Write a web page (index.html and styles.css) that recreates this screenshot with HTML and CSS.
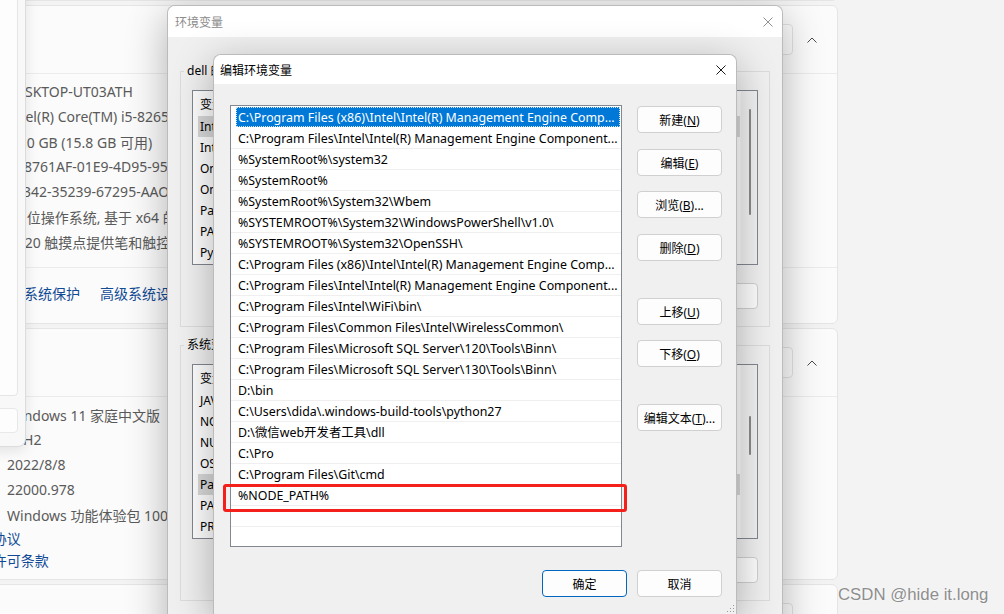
FILE: index.html
```html
<!DOCTYPE html>
<html lang="zh-CN">
  <head>
    <meta charset="UTF-8" />
    <title>编辑环境变量</title>
    <link rel="stylesheet" href="styles.css">
  </head>
  <body>
    <!-- settings page behind the dialogs -->
    <div class="settings">
      <section class="card card-top"></section>
      <section class="card">
        <div class="card-head">
          <span class="card-title">设备规格</span>
          <button class="copy-btn">复制</button>
          <svg class="chevron" viewBox="0 0 16 16"><path d="M3.5 10.5 L8 6 L12.5 10.5" /></svg>
        </div>
        <dl class="spec spec-first">
          <dt>设备名称</dt><dd>DESKTOP-UT03ATH</dd>
          <dt>处理器</dt><dd>Intel(R) Core(TM) i5-8265U CPU @ 1.60GHz</dd>
          <dt>机带 RAM</dt><dd>16.0 GB (15.8 GB 可用)</dd>
          <dt>设备 ID</dt><dd>A18761AF-01E9-4D95-9563-1C2B9A5E3F10</dd>
          <dt>产品 ID</dt><dd>00342-35239-67295-AAOEM</dd>
          <dt>系统类型</dt><dd>64 位操作系统, 基于 x64 的处理器</dd>
          <dt>笔和触控</dt><dd>为 20 触摸点提供笔和触控支持</dd>
        </dl>
        <div class="card-foot">
          <span>相关链接</span>
          <a>域或工作组</a>
          <a>系统保护</a>
          <a>高级系统设置</a>
        </div>
      </section>
      <section class="card">
        <div class="card-head">
          <span class="card-title">Windows 规格</span>
          <button class="copy-btn">复制</button>
          <svg class="chevron" viewBox="0 0 16 16"><path d="M3.5 10.5 L8 6 L12.5 10.5" /></svg>
        </div>
        <dl class="spec">
          <dt>版本</dt><dd>Windows 11 家庭中文版</dd>
          <dt>版本号</dt><dd>21H2</dd>
          <dt>安装日期</dt><dd>2022/8/8</dd>
          <dt>操作系统版本</dt><dd>22000.978</dd>
          <dt>体验</dt><dd>Windows 功能体验包 1000.22000.978.0</dd>
        </dl>
        <div class="card-links">
          <a>Microsoft 服务协议</a>
          <a>Microsoft 软件许可条款</a>
        </div>
      </section>
      <section class="card card-last">
        <div class="card-head">
          <span class="card-title">支持</span>
          <button class="copy-btn">复制</button>
          <svg class="chevron" viewBox="0 0 16 16"><path d="M3.5 10.5 L8 6 L12.5 10.5" /></svg>
        </div>
      </section>
    </div>

    <div class="flyout">
      <div class="flyout-panel"></div>
      <div class="flyout-box"></div>
    </div>

    <!-- 环境变量 -->
    <div class="dialog env">
      <div class="titlebar">
        <span>环境变量</span>
        <svg class="close" viewBox="0 0 10 10"><path d="M0.5 0.5 L9.5 9.5 M9.5 0.5 L0.5 9.5" /></svg>
      </div>
      <div class="env-body">
        <fieldset class="group">
          <legend>dell 的用户变量(<u>U</u>)</legend>
          <div class="listview lv-user">
            <div class="lv-rows">
              <div class="lv-head"><span class="col-name">变量</span><span>值</span></div>
              <div class="lv-row sel"><span class="col-name">IntelliJ IDEA</span><span>D:\IntelliJ IDEA 2021.2\bin;</span></div>
              <div class="lv-row"><span class="col-name">IntelliJ IDEA Community Edition</span><span>D:\IDEA\bin;</span></div>
              <div class="lv-row"><span class="col-name">OneDrive</span><span>C:\Users\dida\OneDrive</span></div>
              <div class="lv-row"><span class="col-name">OneDriveConsumer</span><span>C:\Users\dida\OneDrive</span></div>
              <div class="lv-row"><span class="col-name">Path</span><span>C:\Users\dida\AppData\Local\Microsoft\WindowsApps;</span></div>
              <div class="lv-row"><span class="col-name">PATH</span><span>D:\bin</span></div>
              <div class="lv-row"><span class="col-name">PyCharm</span><span>D:\PyCharm\bin;</span></div>
            </div>
            <div class="scrollbar"><i class="thumb thumb-user"></i></div>
          </div>
          <div class="group-btns">
            <button class="btn">新建(<u>N</u>)...</button>
            <button class="btn">编辑(<u>E</u>)...</button>
            <button class="btn">删除(<u>D</u>)</button>
          </div>
        </fieldset>
        <fieldset class="group group-sys">
          <legend>系统变量(<u>S</u>)</legend>
          <div class="listview lv-sys">
            <div class="lv-rows">
              <div class="lv-head"><span class="col-name">变量</span><span>值</span></div>
              <div class="lv-row"><span class="col-name">JAVA_HOME</span><span>C:\Program Files\Java\jdk1.8.0</span></div>
              <div class="lv-row"><span class="col-name">NODE_PATH</span><span>D:\nodejs\node_global\node_modules</span></div>
              <div class="lv-row"><span class="col-name">NUMBER_OF_PROCESSORS</span><span>8</span></div>
              <div class="lv-row"><span class="col-name">OS</span><span>Windows_NT</span></div>
              <div class="lv-row sel"><span class="col-name">Path</span><span>C:\Program Files (x86)\Intel\Intel(R) Management Engine</span></div>
              <div class="lv-row"><span class="col-name">PATHEXT</span><span>.COM;.EXE;.BAT;.CMD;.VBS;.VBE;.JS</span></div>
              <div class="lv-row"><span class="col-name">PROCESSOR_ARCHITECTURE</span><span>AMD64</span></div>
            </div>
            <div class="scrollbar"><i class="thumb thumb-sys"></i></div>
          </div>
          <div class="group-btns">
            <button class="btn">新建(<u>W</u>)...</button>
            <button class="btn">编辑(<u>I</u>)...</button>
            <button class="btn">删除(<u>L</u>)</button>
          </div>
        </fieldset>
      </div>
    </div>

    <!-- 编辑环境变量 -->
    <div class="dialog edit">
      <div class="titlebar">
        <span>编辑环境变量</span>
        <svg class="close" viewBox="0 0 10 10"><path d="M0.5 0.5 L9.5 9.5 M9.5 0.5 L0.5 9.5" /></svg>
      </div>
      <div class="edit-body">
        <ul class="pathlist">
          <li class="sel"><span>C:\Program Files (x86)\Intel\Intel(R) Management Engine Comp...</span></li>
          <li>C:\Program Files\Intel\Intel(R) Management Engine Component...</li>
          <li>%SystemRoot%\system32</li>
          <li>%SystemRoot%</li>
          <li>%SystemRoot%\System32\Wbem</li>
          <li>%SYSTEMROOT%\System32\WindowsPowerShell\v1.0\</li>
          <li>%SYSTEMROOT%\System32\OpenSSH\</li>
          <li>C:\Program Files (x86)\Intel\Intel(R) Management Engine Comp...</li>
          <li>C:\Program Files\Intel\Intel(R) Management Engine Component...</li>
          <li>C:\Program Files\Intel\WiFi\bin\</li>
          <li>C:\Program Files\Common Files\Intel\WirelessCommon\</li>
          <li>C:\Program Files\Microsoft SQL Server\120\Tools\Binn\</li>
          <li>C:\Program Files\Microsoft SQL Server\130\Tools\Binn\</li>
          <li>D:\bin</li>
          <li>C:\Users\dida\.windows-build-tools\python27</li>
          <li>D:\微信web开发者工具\dll</li>
          <li>C:\Pro</li>
          <li>C:\Program Files\Git\cmd</li>
          <li>%NODE_PATH%</li>
          <li></li>
          <li></li>
        </ul>
        <div class="side-btns">
          <button class="btn">新建(<u>N</u>)</button>
          <button class="btn nudge">编辑(<u>E</u>)</button>
          <button class="btn">浏览(<u>B</u>)...</button>
          <button class="btn nudge">删除(<u>D</u>)</button>
          <button class="btn spaced">上移(<u>U</u>)</button>
          <button class="btn">下移(<u>O</u>)</button>
          <button class="btn spaced">编辑文本(<u>T</u>)...</button>
        </div>
        <div class="foot-btns">
          <button class="btn primary">确定</button>
          <button class="btn">取消</button>
        </div>
      </div>
      <div class="mark"></div>
      <svg class="grip" viewBox="0 0 10 10">
        <rect x="8" y="2" width="1" height="1" /><rect x="5" y="5" width="1" height="1" /><rect x="8" y="5" width="1" height="1" />
        <rect x="2" y="8" width="1" height="1" /><rect x="5" y="8" width="1" height="1" /><rect x="8" y="8" width="1" height="1" />
      </svg>
    </div>

    <div class="watermark">CSDN @hide it.long</div>
  </body>
</html>
```

FILE: styles.css
```css
* {
  box-sizing: border-box;
}
html,
body {
  margin: 0;
}
body {
  position: relative;
  width: 1004px;
  height: 614px;
  overflow: hidden;
  background: #f3f3f3;
  font-family: "Noto Sans", "Noto Sans CJK SC", sans-serif;
  font-size: 12px;
  color: #000;
}
button {
  font: inherit;
  color: inherit;
}

/* settings page */
.settings {
  position: absolute;
  left: -160px;
  top: -40px;
  width: 998px;
  display: flex;
  flex-direction: column;
  gap: 4px;
  font-size: 14px;
  color: #5a5a5a;
}
.card {
  background: #fbfbfb;
  border: 1px solid #e5e5e5;
  border-radius: 6px;
}
.card-top {
  height: 41px;
}
.card-last {
  height: 200px;
}
.card-head {
  height: 68px;
  display: flex;
  align-items: center;
  padding: 0 17px 0 52px;
  border-bottom: 1px solid #ebebeb;
}
.card-title {
  flex: 1;
  color: #1b1b1b;
}
.copy-btn {
  width: 80px;
  height: 31px;
  margin-right: 11px;
  border: 1px solid #e3e3e3;
  border-radius: 4px;
  background: #fdfdfd;
  font-size: 14px;
}
.chevron {
  width: 16px;
  height: 16px;
  fill: none;
  stroke: #4a4a4a;
  stroke-width: 1;
}
.spec {
  display: grid;
  grid-template-columns: 114px 1fr;
  grid-auto-rows: 25px;
  align-items: center;
  margin: 0;
  padding: 5px 0 1px 52px;
  white-space: nowrap;
}
.spec-first {
  padding: 5px 0 13px 52px;
  border-bottom: 1px solid #ebebeb;
}
.spec dt,
.spec dd {
  margin: 0;
}
.card-foot {
  height: 55px;
  display: flex;
  align-items: center;
  gap: 20px;
  padding: 0 0 5px 17px;
  white-space: nowrap;
}
.card-foot a,
.card-links a {
  color: #114a95;
}
.card-links {
  display: flex;
  flex-direction: column;
  padding: 0 0 7px 58px;
}
.card-links a {
  line-height: 22px;
  white-space: nowrap;
}

.flyout {
  position: absolute;
  left: -200px;
  top: -10px;
  width: 226px;
  height: 457px;
  background: #f8f8f8;
  border: 1px solid #dcdcdc;
  border-radius: 8px;
  box-shadow: 0 4px 14px rgba(0, 0, 0, 0.1);
}
.flyout-panel {
  width: 217px;
  height: 405px;
  background: #fdfdfd;
  border: 1px solid #e5e5e5;
  border-radius: 0 0 4px 0;
}
.flyout-box {
  width: 217px;
  height: 25px;
  margin-top: 12px;
  background: #fdfdfd;
  border: 1px solid #e8e8e8;
  border-radius: 4px;
}

/* dialogs */
.dialog {
  position: absolute;
  background: #f0f0f0;
  border: 1px solid rgba(0, 0, 0, 0.22);
  border-radius: 8px 8px 0 0;
  box-shadow: 0 10px 40px rgba(0, 0, 0, 0.3);
}
.titlebar {
  display: flex;
  align-items: center;
  justify-content: space-between;
  background: #fff;
  border-radius: 7px 7px 0 0;
}
.close {
  width: 10px;
  height: 10px;
  fill: none;
  stroke-width: 1;
}
.env {
  left: 167px;
  top: 5px;
  width: 616px;
  height: 660px;
}
.env .titlebar {
  height: 31px;
  padding: 0 9px 0 7px;
  color: #8c8c8c;
}
.env .close {
  stroke: #909090;
}
.env-body {
  padding: 0 12px;
}
.group {
  margin: 26px 0 0;
  padding: 11px 11px 17px;
  border: 1px solid #dcdcdc;
}
.group-sys {
  margin-top: 10px;
}
.group legend {
  margin-left: -8px;
  padding: 0 3px;
  line-height: 16px;
}
.listview {
  display: flex;
  height: 175px;
  background: #fff;
  border: 1px solid #828790;
}
.lv-rows {
  flex: 1;
  overflow: hidden;
}
.lv-head {
  display: flex;
  height: 25px;
  align-items: center;
  padding-left: 7px;
}
.col-name {
  width: 190px;
  flex: none;
}
.lv-row {
  display: flex;
  height: 21px;
  align-items: center;
  padding-left: 5px;
  white-space: nowrap;
}
.lv-row .col-name {
  padding-left: 2px;
}
.lv-row.sel {
  background: #d9d9d9;
  background-clip: content-box;
}
.scrollbar {
  width: 17px;
  flex: none;
  background: #f2f2f2;
  border-left: 1px solid #f9f9f9;
}
.thumb {
  display: block;
  width: 2px;
  margin-left: 8px;
  background: #8a8a8a;
  border-radius: 1px;
}
.thumb-user {
  margin-top: 18px;
  height: 106px;
}
.thumb-sys {
  margin-top: 51px;
  height: 39px;
}
.group-btns {
  display: flex;
  justify-content: flex-end;
  gap: 8px;
  margin-top: 18px;
}
.btn {
  height: 27px;
  padding: 0;
  background: #fdfdfd;
  border: 1px solid #d0d0d0;
  border-radius: 4px;
  font-size: 12px;
}
.group-btns .btn {
  width: 96px;
  height: 26px;
}

.edit {
  left: 213px;
  top: 54px;
  width: 524px;
  height: 561px;
}
.edit .titlebar {
  height: 29px;
  padding: 0 10px 0 6px;
}
.edit .close {
  stroke: #1a1a1a;
}
.edit-body {
  display: grid;
  grid-template-columns: 392px 85px;
  column-gap: 15px;
  padding: 21px 14px 0 16px;
}
.pathlist {
  height: 442px;
  margin: 0;
  padding: 1px 0 0;
  list-style: none;
  background: #fff;
  border: 1px solid #828790;
  overflow: hidden;
  font-size: 12.4px;
}
.pathlist li {
  height: 21px;
  line-height: 21px;
  padding: 0 1px 0 5px;
  text-indent: 2px;
  border-bottom: 1px solid #efefef;
  white-space: nowrap;
  overflow: hidden;
  text-overflow: ellipsis;
}
.pathlist li.sel {
  border-bottom-color: #fff;
}
.pathlist li.sel span {
  display: block;
  height: 20px;
  line-height: 19px;
  text-indent: 1px;
  background: #0078d7;
  color: #fff;
  border: 1px dotted #cfe4f7;
  overflow: hidden;
  text-overflow: ellipsis;
}
.side-btns {
  display: flex;
  flex-direction: column;
  gap: 15px;
  padding-top: 1px;
}
.side-btns .nudge {
  margin-top: 1px;
}
.side-btns .spaced {
  margin-top: 22px;
}
.foot-btns {
  grid-column: 1 / -1;
  display: flex;
  justify-content: flex-end;
  gap: 10px;
  margin-top: 23px;
}
.foot-btns .btn {
  width: 85px;
}
.btn.primary {
  border-color: #0067c0;
}
.mark {
  position: absolute;
  left: 9px;
  top: 429px;
  width: 404px;
  height: 28px;
  border: 3px solid #f4201c;
  border-radius: 3px;
}
.grip {
  position: absolute;
  right: 1px;
  bottom: 1px;
  width: 10px;
  height: 10px;
  fill: #9a9a9a;
}

.watermark {
  position: absolute;
  left: 838px;
  top: 585px;
  font-family: "Liberation Sans", sans-serif;
  font-size: 16.8px;
  color: #8e8e8e;
  text-shadow: 0 0 2px #fff;
}
```
